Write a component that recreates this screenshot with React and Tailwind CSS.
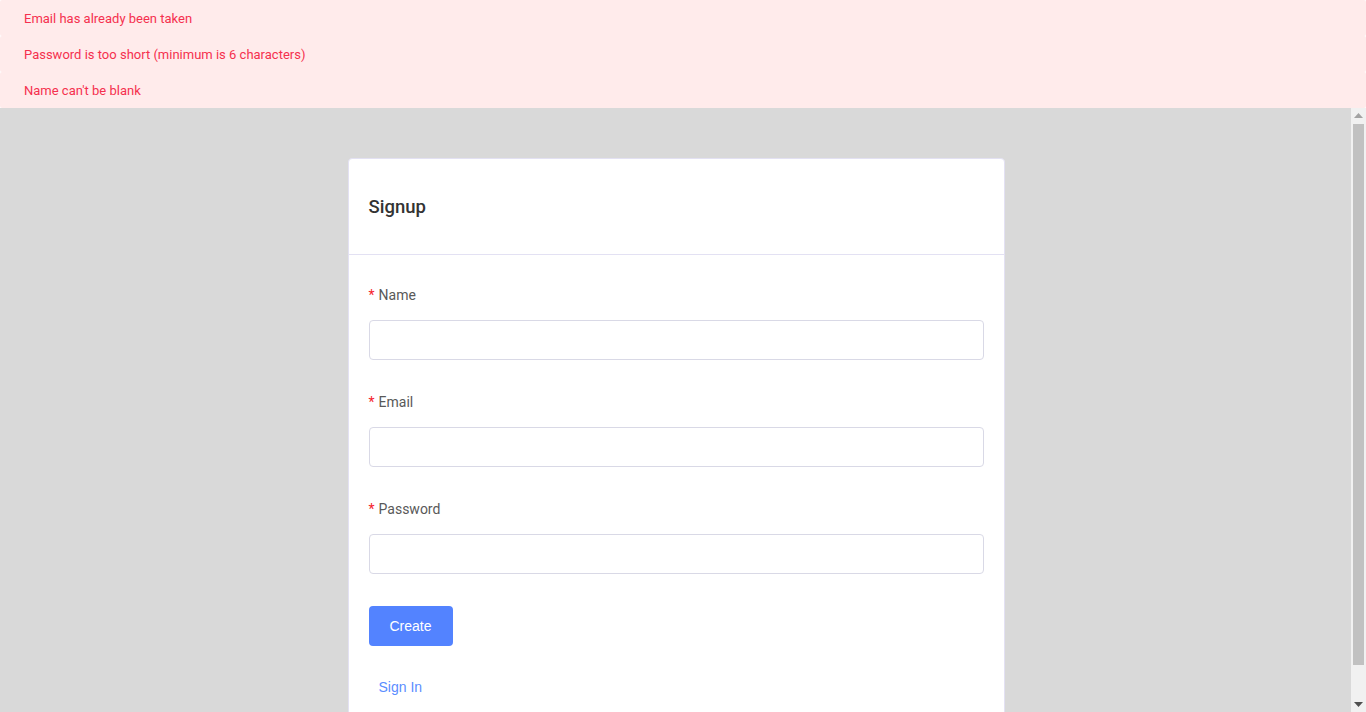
import React from 'react';

const ERRORS = [
  'Email has already been taken',
  'Password is too short (minimum is 6 characters)',
  "Name can't be blank",
];

function Field({ label, type = 'text' }) {
  return (
    <div className="mb-[31px]">
      <label className="flex items-center h-5 pt-[2px] text-[14px] text-[#595959] mb-4">
        <span className="text-[#f5222d] mr-[4px]">*</span>
        {label}
      </label>
      <input
        type={type}
        className="block w-full h-10 rounded-[4px] border border-[#d9d9e6] bg-white px-3 outline-none"
      />
    </div>
  );
}

function Scrollbar() {
  return (
    <div className="w-[15px] shrink-0 bg-[#f1f1f1] flex flex-col items-center">
      <div className="h-[15px] w-full flex items-center justify-center">
        <svg width="9" height="5" viewBox="0 0 9 5"><path d="M4.5 0L9 5H0z" fill="#a3a3a3" /></svg>
      </div>
      <div className="w-[11px] h-[541px] mt-px bg-[#c1c1c1]" />
      <div className="flex-1" />
      <div className="h-[15px] w-full flex items-center justify-center">
        <svg width="9" height="5" viewBox="0 0 9 5"><path d="M0 0H9L4.5 5z" fill="#505050" /></svg>
      </div>
    </div>
  );
}

export default function App() {
  return (
    <div className="h-screen flex flex-col font-['Roboto',sans-serif]">
      <div className="shrink-0">
        {ERRORS.map((e) => (
          <div key={e} className="h-9 flex items-center pt-[2px] px-6 bg-[#ffebeb] rounded-[2px] text-[13px] text-[#f5304e]">
            {e}
          </div>
        ))}
      </div>
      <div className="flex-1 flex min-h-0">
        <div className="flex-1 overflow-hidden bg-[#d9d9d9]">
          <div className="pt-[50px] pb-10 pl-px flex justify-center">
            <div className="w-[657px] bg-white border border-[#e3e1f3] rounded-[4px]">
              <div className="h-[96px] flex items-center px-5 pt-[2px] border-b border-[#e3e1f3]">
                <h1 className="text-[18.5px] font-medium text-[#333]">Signup</h1>
              </div>
              <div className="px-5 pt-[29px] pb-5">
                <Field label="Name" />
                <Field label="Email" />
                <Field label="Password" type="password" />
                <div className="pt-px">
                  <button className="h-10 w-[84px] rounded-[4px] bg-[#5383ff] text-white text-[14px] font-['Liberation_Sans',sans-serif]">
                    Create
                  </button>
                </div>
                <div className="mt-[21px] h-10 flex items-center px-[10px]">
                  <a className="text-[14px] text-[#5a8dff] font-['Liberation_Sans',sans-serif] cursor-pointer">Sign In</a>
                </div>
              </div>
            </div>
          </div>
        </div>
        <Scrollbar />
      </div>
    </div>
  );
}
